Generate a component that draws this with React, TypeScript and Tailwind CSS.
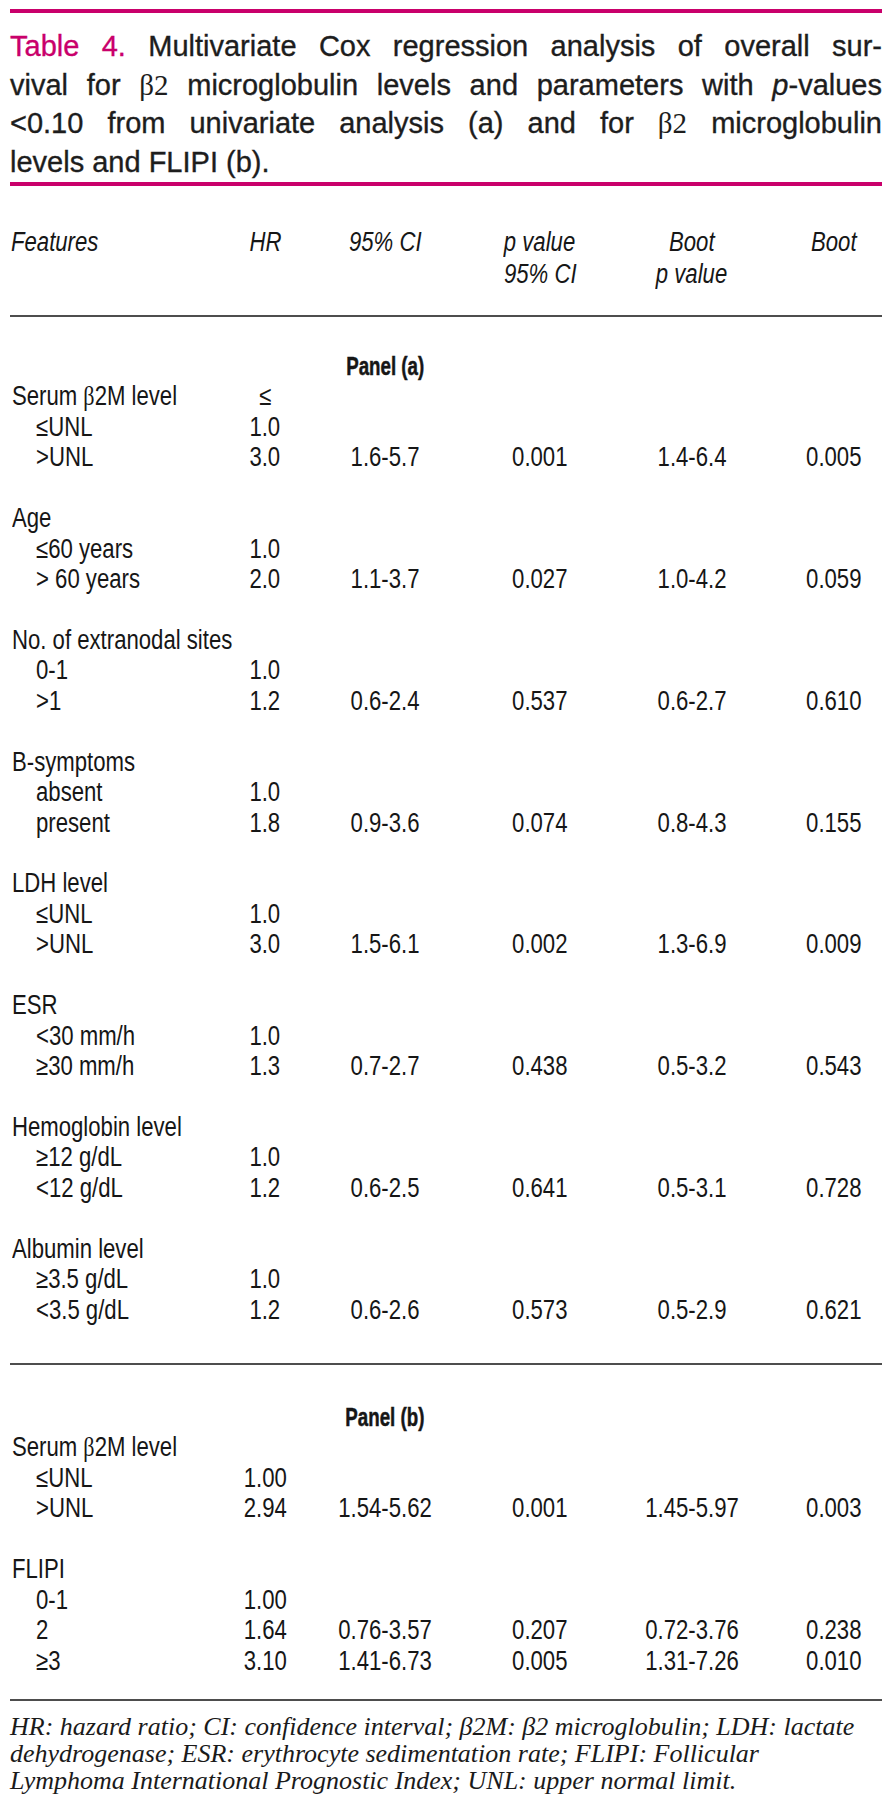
import React from 'react'

type Row = {
  label?: React.ReactNode
  indent?: boolean
  hr?: string
  ci?: string
  p?: string
  bci?: string
  bp?: string
  panel?: string
}

const beta = <span className="font-['Liberation_Serif',serif]">β</span>

const panelA: Row[] = [
  { panel: 'Panel (a)' },
  { label: <>Serum {beta}2M level</>, hr: '≤' },
  { label: '≤UNL', indent: true, hr: '1.0' },
  { label: '>UNL', indent: true, hr: '3.0', ci: '1.6-5.7', p: '0.001', bci: '1.4-6.4', bp: '0.005' },
  {},
  { label: 'Age' },
  { label: '≤60 years', indent: true, hr: '1.0' },
  { label: '> 60 years', indent: true, hr: '2.0', ci: '1.1-3.7', p: '0.027', bci: '1.0-4.2', bp: '0.059' },
  {},
  { label: 'No. of extranodal sites' },
  { label: '0-1', indent: true, hr: '1.0' },
  { label: '>1', indent: true, hr: '1.2', ci: '0.6-2.4', p: '0.537', bci: '0.6-2.7', bp: '0.610' },
  {},
  { label: 'B-symptoms' },
  { label: 'absent', indent: true, hr: '1.0' },
  { label: 'present', indent: true, hr: '1.8', ci: '0.9-3.6', p: '0.074', bci: '0.8-4.3', bp: '0.155' },
  {},
  { label: 'LDH level' },
  { label: '≤UNL', indent: true, hr: '1.0' },
  { label: '>UNL', indent: true, hr: '3.0', ci: '1.5-6.1', p: '0.002', bci: '1.3-6.9', bp: '0.009' },
  {},
  { label: 'ESR' },
  { label: '<30 mm/h', indent: true, hr: '1.0' },
  { label: '≥30 mm/h', indent: true, hr: '1.3', ci: '0.7-2.7', p: '0.438', bci: '0.5-3.2', bp: '0.543' },
  {},
  { label: 'Hemoglobin level' },
  { label: '≥12 g/dL', indent: true, hr: '1.0' },
  { label: '<12 g/dL', indent: true, hr: '1.2', ci: '0.6-2.5', p: '0.641', bci: '0.5-3.1', bp: '0.728' },
  {},
  { label: 'Albumin level' },
  { label: '≥3.5 g/dL', indent: true, hr: '1.0' },
  { label: '<3.5 g/dL', indent: true, hr: '1.2', ci: '0.6-2.6', p: '0.573', bci: '0.5-2.9', bp: '0.621' },
]

const panelB: Row[] = [
  { panel: 'Panel (b)' },
  { label: <>Serum {beta}2M level</> },
  { label: '≤UNL', indent: true, hr: '1.00' },
  { label: '>UNL', indent: true, hr: '2.94', ci: '1.54-5.62', p: '0.001', bci: '1.45-5.97', bp: '0.003' },
  {},
  { label: 'FLIPI' },
  { label: '0-1', indent: true, hr: '1.00' },
  { label: '2', indent: true, hr: '1.64', ci: '0.76-3.57', p: '0.207', bci: '0.72-3.76', bp: '0.238' },
  { label: '≥3', indent: true, hr: '3.10', ci: '1.41-6.73', p: '0.005', bci: '1.31-7.26', bp: '0.010' },
]

const cols = 'grid grid-cols-[220px_70px_170px_140px_164px_108px]'

// condensed look: the narrow face isn't installed, so squeeze Liberation Sans
function Sq({ children, left }: { children?: React.ReactNode; left?: boolean }) {
  return (
    <span className={`inline-block whitespace-nowrap scale-x-[0.82] ${left ? 'origin-left' : 'origin-center'}`}>
      {children}
    </span>
  )
}

function TableRow({ row }: { row: Row }) {
  if (row.panel) {
    return (
      <div className={`${cols} h-[30.45px] leading-[30.45px]`}>
        <div />
        <div />
        <div className="text-center font-bold text-[26px] [-webkit-text-stroke:0.5px_#161616]">
          <span className="inline-block whitespace-nowrap scale-x-[0.72] origin-center">{row.panel}</span>
        </div>
      </div>
    )
  }
  return (
    <div className={`${cols} h-[30.45px] leading-[30.45px]`}>
      <div className={row.indent ? 'pl-[26px]' : 'pl-[2px]'}>
        <Sq left>{row.label}</Sq>
      </div>
      <div className="text-center"><Sq>{row.hr}</Sq></div>
      <div className="text-center"><Sq>{row.ci}</Sq></div>
      <div className="text-center"><Sq>{row.p}</Sq></div>
      <div className="text-center"><Sq>{row.bci}</Sq></div>
      <div className="text-center pl-[12px]"><Sq>{row.bp}</Sq></div>
    </div>
  )
}

export default function App() {
  return (
    <div className="w-[892px] min-h-[1800px] bg-white">
      <div className="ml-[10px] w-[872px] pt-[9px]">
        <div className="h-[4px] bg-[#c9006b]" />

        {/* Title */}
        <div className="mt-[14px] text-[29px] leading-[38.5px] text-[#1d1d1d] font-['Liberation_Sans',sans-serif] [-webkit-text-stroke:0.35px_#1d1d1d]">
          <div className="whitespace-nowrap text-justify [text-align-last:justify]">
            <span className="text-[#c9006b] [-webkit-text-stroke:0.35px_#c9006b]">Table 4.</span> Multivariate Cox regression analysis of overall sur-
          </div>
          <div className="whitespace-nowrap text-justify [text-align-last:justify]">
            vival for <span className="font-['Liberation_Serif',serif] [-webkit-text-stroke:0px]">β2</span> microglobulin levels and parameters with <i>p</i>-values
          </div>
          <div className="whitespace-nowrap text-justify [text-align-last:justify]">
            &lt;0.10 from univariate analysis (a) and for <span className="font-['Liberation_Serif',serif] [-webkit-text-stroke:0px]">β2</span> microglobulin
          </div>
          <div className="whitespace-nowrap">levels and FLIPI (b).</div>
        </div>

        <div className="mt-[1px] h-[4px] bg-[#c9006b]" />

        <div className="font-['Liberation_Sans',sans-serif] text-[27px] text-[#161616]">
          {/* Header */}
          <div className={`${cols} mt-[40px] italic leading-[32px]`}>
            <div className="pl-[1px]"><Sq left>Features</Sq></div>
            <div className="text-center"><Sq>HR</Sq></div>
            <div className="text-center"><Sq>95% CI</Sq></div>
            <div className="text-center">
              <div><Sq>p value</Sq></div>
              <div><Sq>95% CI</Sq></div>
            </div>
            <div className="text-center">
              <div><Sq>Boot</Sq></div>
              <div><Sq>p value</Sq></div>
            </div>
            <div className="text-center pl-[12px]"><Sq>Boot</Sq></div>
          </div>

          <div className="mt-[25px] h-[2px] bg-[#4d4d4d]" />

          <div className="mt-[34px]">
            {panelA.map((r, i) => (
              <TableRow key={i} row={r} />
            ))}
          </div>

          <div className="mt-[38px] h-[2px] bg-[#4d4d4d]" />

          <div className="mt-[37px]">
            {panelB.map((r, i) => (
              <TableRow key={i} row={r} />
            ))}
          </div>

          <div className="mt-[23px] h-[2px] bg-[#4d4d4d]" />
        </div>

        {/* Footnote */}
        <div className="mt-[12px] font-['Liberation_Serif',serif] italic text-[26px] leading-[27px] text-[#1a1a1a]">
          <div className="whitespace-nowrap">HR: hazard ratio; CI: confidence interval; β2M: β2 microglobulin; LDH: lactate</div>
          <div className="whitespace-nowrap">dehydrogenase; ESR: erythrocyte sedimentation rate; FLIPI: Follicular</div>
          <div className="whitespace-nowrap">Lymphoma International Prognostic Index; UNL: upper normal limit.</div>
        </div>
      </div>
    </div>
  )
}
